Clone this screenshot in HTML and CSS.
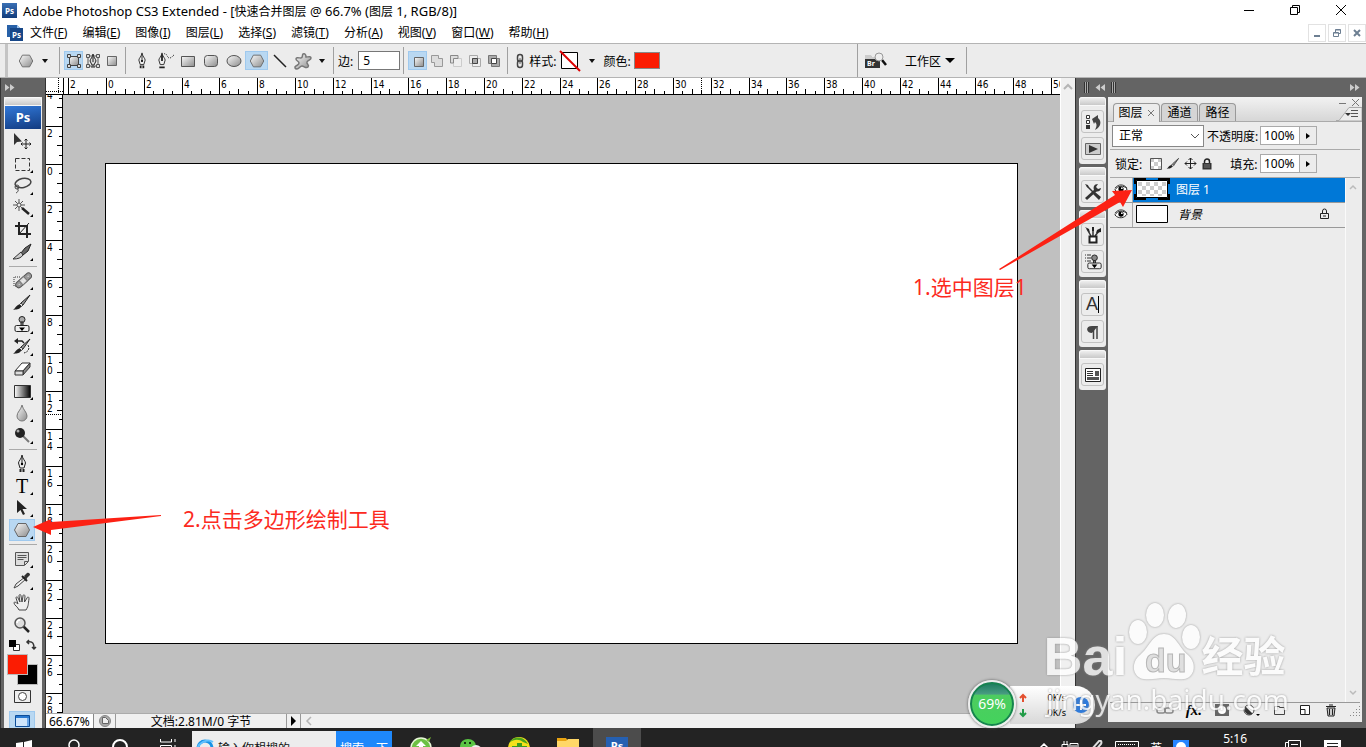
FILE: index.html
```html
<!DOCTYPE html>
<html lang="zh-CN">
<head>
    <meta charset="UTF-8">
    <meta name="viewport" content="width=device-width, initial-scale=1.0">
    <title>Adobe Photoshop CS3 Extended</title>
    <link rel="stylesheet" href="styles.css">
</head>
<body>
    <!-- shared icons -->
    <svg class="sprite" aria-hidden="true">
        <defs>
            <linearGradient id="gray" x1="0" y1="0" x2="1" y2="1">
                <stop offset="0" stop-color="#fafafa"/><stop offset="1" stop-color="#8c8c8c"/>
            </linearGradient>
            <linearGradient id="fade"><stop offset="0" stop-color="#fff"/><stop offset="1" stop-color="#000"/></linearGradient>
            <pattern id="checks" width="8" height="8" patternUnits="userSpaceOnUse">
                <path fill="#fff" d="M0 0h8v8H0z"/><path fill="#ccc" d="M0 0h4v4H0zM4 4h4v4H4z"/>
            </pattern>
        </defs>
        <symbol id="i-hexagon" viewBox="0 0 20 20"><path d="M6 3.500h8l3.500 6.500-3.500 6.500H6L2.500 10z" fill="url(#gray)" stroke="#666"/></symbol>
        <symbol id="i-pen" viewBox="0 0 20 20"><path d="M10 1c.5 4 3.500 6 3.500 8L12 14H8L6.500 9C6.500 7 9.500 5 10 1z" fill="#eee" stroke="#222"/><path d="M10 3v7" stroke="#222"/><circle cx="10" cy="10" r="1.200"/><path d="M7.500 15h5v3h-5z" fill="#222"/><path d="M10 15v3" stroke="#eee"/></symbol>
        <symbol id="i-eye" viewBox="0 0 16 12"><path d="M1 7c3-5 10-6 14-1-3 5-10 6-14 1z" fill="#fff" stroke="#111"/><path d="M1 5c4-5 10-5 14 0" fill="none" stroke="#333"/><circle cx="8" cy="6" r="3"/><circle cx="9" cy="5" r="1" fill="#fff"/></symbol>
        <symbol id="i-lock" viewBox="0 0 12 12"><path d="M3.500 5V3.500a2.500 2.500 0 0 1 5 0V5" fill="none" stroke="#222" stroke-width="1.500"/><path d="M1.500 5h9v6.500h-9z" fill="#333"/><path d="M3 7h6M3 9h6" stroke="#777"/></symbol>
        <symbol id="i-brush" viewBox="0 0 20 20"><path d="M18 2l-9 8 2 2z" fill="#999" stroke="#222"/><path d="M9 10l2 2-1.500 1.500-2-2z" fill="#ddd" stroke="#444"/><path d="M7.500 11.500l2 2C7 17 4 16 1 17c2-1 3-5 6.500-5.500z" fill="#222"/></symbol>
        <symbol id="i-stamp" viewBox="0 0 20 20"><circle cx="10" cy="4.500" r="3" fill="#aaa" stroke="#222"/><path d="M9 7h2v4H9z" fill="#888" stroke="#222"/><rect x="3" y="10.500" width="14" height="6" rx="1.500" fill="#eee" stroke="#222"/><path d="M7 12.500h6L10 16z"/></symbol>
        <symbol id="i-zoom" viewBox="0 0 20 20"><path d="M11 11l6 6" stroke="#222" stroke-width="2.500"/><circle cx="8" cy="8" r="5" fill="#ddd" stroke="#555" stroke-width="1.500"/><path d="M5 8a3 3 0 0 1 3-3" stroke="#fff" fill="none" stroke-width="1.500"/></symbol>
        <symbol id="i-ffwd" viewBox="0 0 10 7"><path d="M0 0l4.500 3.500L0 7zM5 0l4.500 3.500L5 7z" fill="#ccc"/></symbol>
        <symbol id="i-link" viewBox="0 0 12 16"><rect x="3.500" y="1.500" width="5" height="7" rx="2.500" fill="none" stroke="#444" stroke-width="1.500"/><rect x="3.500" y="7.500" width="5" height="7" rx="2.500" fill="none" stroke="#444" stroke-width="1.500"/><path d="M6 5v6" stroke="#666"/></symbol>
    </svg>

    <div class="window">
        <header class="titlebar">
            <span class="ps-icon">Ps</span>
            <h1>Adobe Photoshop CS3 Extended - [<span>快速合并图层</span> @ 66.7% (<span>图层</span> 1, RGB/8)]</h1>
            <div class="win-buttons">
                <button aria-label="最小化"><svg width="12" height="12"><path d="M1 6.500h10" stroke="#000"/></svg></button>
                <button aria-label="还原"><svg width="12" height="12" fill="none" stroke="#000"><path d="M1.500 3.500h7v7h-7zM3.500 3.500v-2h7v7h-2"/></svg></button>
                <button aria-label="关闭"><svg width="12" height="12"><path d="M1 1l10 10M11 1L1 11" stroke="#000"/></svg></button>
            </div>
        </header>

        <nav class="menubar">
            <svg class="doc-icon" width="16" height="16"><path d="M0 0h10l3 3v9H0z" fill="#2861a8"/><path d="M3 3h13v13H3z" fill="#174788"/><path d="M10 0v3h3z" fill="#9cc3ee"/><text x="5" y="13" font-size="8" font-weight="bold" fill="#fff">Ps</text></svg>
            <button>文件(<u>F</u>)</button>
            <button>编辑(<u>E</u>)</button>
            <button>图像(<u>I</u>)</button>
            <button>图层(<u>L</u>)</button>
            <button>选择(<u>S</u>)</button>
            <button>滤镜(<u>T</u>)</button>
            <button>分析(<u>A</u>)</button>
            <button>视图(<u>V</u>)</button>
            <button>窗口(<u>W</u>)</button>
            <button>帮助(<u>H</u>)</button>
            <div class="doc-buttons">
                <button aria-label="最小化文档"><svg width="10" height="10"><path d="M2 8h6" stroke="#6d7f92" stroke-width="2"/></svg></button>
                <button aria-label="还原文档"><svg width="10" height="10" fill="none" stroke="#6d7f92"><path d="M1.500 4.500h5v4h-5zM3.500 4V1.500h5v4H7M3.500 2h5M1.500 5h5"/></svg></button>
                <button aria-label="关闭文档"><svg width="10" height="10"><path d="M2 2l6 6M8 2L2 8" stroke="#6d7f92" stroke-width="2"/></svg></button>
            </div>
        </nav>

        <div class="options">
            <span class="options-grip"></span>
            <div class="opt-group preset">
                <button class="opt-btn" aria-label="多边形预设"><svg width="18" height="18"><use href="#i-hexagon"/></svg></button>
                <button class="caret" aria-label="预设列表"></button>
            </div>
            <div class="opt-group tight">
                <button class="opt-btn on" aria-label="形状图层"><svg width="16" height="16"><path d="M3.500 3.500h9v9h-9z" fill="url(#gray)" stroke="#444"/><path d="M1.500 1.500h3v3h-3zM11.500 1.500h3v3h-3zM1.500 11.500h3v3h-3zM11.500 11.500h3v3h-3z" fill="#ddd" stroke="#444"/></svg></button>
                <button class="opt-btn" aria-label="路径"><svg width="16" height="16"><path d="M3 3h10v10H3z" fill="none" stroke="#555"/><path d="M1.500 1.500h3v3h-3zM11.500 1.500h3v3h-3zM1.500 11.500h3v3h-3zM11.500 11.500h3v3h-3z" fill="#ddd" stroke="#555"/><path d="M8 1c0 3 3 5 3 7l-2 4H7L5 8c0-2 3-4 3-7zM6 14h4" fill="#ddd" stroke="#222"/><path d="M8 4v5" stroke="#222"/></svg></button>
                <button class="opt-btn" aria-label="填充像素"><svg width="16" height="16"><path d="M3.500 3.500h9v9h-9z" fill="url(#gray)" stroke="#666"/></svg></button>
            </div>
            <div class="opt-group shapes">
                <button class="opt-btn" aria-label="钢笔"><svg width="18" height="18"><use href="#i-pen"/></svg></button>
                <button class="opt-btn" aria-label="自由钢笔"><svg width="18" height="18"><g transform="translate(-3 0) scale(.9)"><path d="M10 1c.5 4 3.500 6 3.500 8L12 14H8L6.500 9C6.500 7 9.500 5 10 1z" fill="#eee" stroke="#222"/><path d="M10 3v7M7 17h6" stroke="#222" stroke-width="2"/></g><path d="M8 2c3-2 3 5 6 4s2-2 4-3" fill="none" stroke="#333" stroke-dasharray="1 1"/></svg></button>
                <button class="opt-btn" aria-label="矩形"><svg width="18" height="18"><path d="M2.500 4.500h13v10h-13z" fill="url(#gray)" stroke="#555"/></svg></button>
                <button class="opt-btn" aria-label="圆角矩形"><svg width="18" height="18"><rect x="2.500" y="3.500" width="13" height="11" rx="3" fill="url(#gray)" stroke="#555"/></svg></button>
                <button class="opt-btn" aria-label="椭圆"><svg width="18" height="18"><ellipse cx="9" cy="9" rx="7" ry="5.500" fill="url(#gray)" stroke="#555"/></svg></button>
                <button class="opt-btn on" aria-label="多边形"><svg width="18" height="18"><use href="#i-hexagon"/></svg></button>
                <button class="opt-btn" aria-label="直线"><svg width="18" height="18"><path d="M3 3l12 12" stroke="#222" stroke-width="1.500"/></svg></button>
                <button class="opt-btn" aria-label="自定形状"><svg width="20" height="18"><path d="M10 2c2-1 3 1 3 3 2 0 5-1 5 1s-3 2-4 4 3 3 1 5-4-1-6-1-3 3-5 3-3-2-1-3c1-1 3-1 3-3S3 9 3 7s3-1 5-1 1-3 2-4z" fill="url(#gray)" stroke="#777" stroke-width="1.500"/></svg></button>
                <button class="caret" aria-label="几何选项"></button>
            </div>
            <div class="opt-group">
                <label for="sides">边:</label>
                <input class="sides" id="sides" type="text" value="5">
            </div>
            <div class="opt-group tight">
                <button class="opt-btn on" aria-label="新建形状"><svg width="16" height="16"><path d="M4.500 4.500h9v9h-9z" fill="url(#gray)" stroke="#666"/></svg></button>
                <button class="opt-btn" aria-label="添加"><svg width="16" height="16" fill="#ddd" stroke="#999"><path d="M2.500 2.500h7v3h4v8h-8v-4h-3z"/></svg></button>
                <button class="opt-btn" aria-label="减去"><svg width="16" height="16" fill="#eee" stroke="#ccc"><path d="M5.500 5.500h8v8h-8z"/><path d="M2.500 10V2.500H10v3H5.500V10z" stroke="#888" fill="#ddd"/></svg></button>
                <button class="opt-btn" aria-label="交叉"><svg width="16" height="16" fill="#eee" stroke="#aaa"><path d="M2.500 2.500h8v8h-8zM5.500 5.500h8v8h-8z"/><path d="M5.500 5.500h5v5h-5z" stroke="#444" fill="#aaa"/></svg></button>
                <button class="opt-btn" aria-label="重叠除外"><svg width="16" height="16" fill="#aaa" stroke="#777"><path d="M2.500 2.500h8v8h-8zM5.500 5.500h8v8h-8z"/><path d="M5.500 5.500h5v5h-5z" stroke="#444" fill="#fff"/></svg></button>
            </div>
            <div class="opt-group style-group">
                <svg width="12" height="16"><use href="#i-link"/></svg>
                <span>样式:</span>
                <button class="style-box" aria-label="样式"><svg width="22" height="22"><path d="M2.500 2.500h16v16h-16z" fill="#fff" stroke="#000"/><path d="M1 1l20 20" stroke="#d00" stroke-width="2"/></svg></button>
                <button class="caret" aria-label="样式列表"></button>
                <span>颜色:</span>
                <button class="color-box" aria-label="颜色"></button>
            </div>
            <div class="workspace">
                <button aria-label="转到 Bridge"><svg width="24" height="18"><path d="M1 4h6l1 2h8v10H1z" fill="#333"/><path d="M1 3h6l1 2h6v2H1z" fill="#ccc"/><path d="M18 8l4 5" stroke="#111" stroke-width="2.500"/><circle cx="15" cy="5" r="4" fill="#eee" stroke="#999"/><text x="3" y="14" font-size="7" font-weight="bold" fill="#fff">Br</text></svg></button>
                <button class="workspace-menu">工作区<span class="triangle"></span></button>
            </div>
        </div>

        <main class="main">
            <aside class="toolbox">
                <div class="toolbox-head"><svg width="10" height="7"><use href="#i-ffwd"/></svg></div>
                <div class="tools">
                    <div class="grip"></div>
                    <div class="ps-logo">Ps</div>
                    <div class="tool-list">
                        <button class="tool plain" aria-label="移动"><svg width="20" height="20"><path d="M2 1v12l3-3 5-.5z" fill="#333"/><path d="M14 7v10M9 12h10M12.500 8.500L14 7l1.500 1.500M12.500 15.500L14 17l1.500-1.500M10.500 10.500L9 12l1.500 1.500M17.500 10.500L19 12l-1.500 1.500" fill="none" stroke="#222"/></svg></button>
                        <button class="tool" aria-label="矩形选框"><svg width="20" height="20"><path d="M3.500 4.500h14v12h-14z" fill="none" stroke="#333" stroke-dasharray="4 2"/></svg></button>
                        <button class="tool" aria-label="套索"><svg width="20" height="20" fill="none" stroke="#444"><ellipse cx="11" cy="7" rx="8" ry="4.500" transform="rotate(-12 11 7)" stroke-width="1.500"/><circle cx="5" cy="11" r="2"/><path d="M5 13c3 0 0 4-1 4"/></svg></button>
                        <button class="tool" aria-label="魔棒"><svg width="20" height="20" stroke="#555"><path d="M7 1v12M1 7h12M3 3l8 8M11 3l-8 8"/><circle cx="7" cy="7" r="2" fill="#eee"/><path d="M10 10l7 6" stroke="#222" stroke-width="2.500"/></svg></button>
                        <button class="tool plain" aria-label="裁剪"><svg width="20" height="20" fill="none" stroke="#222" stroke-width="2"><path d="M7 2v12h12M3 6h12v12"/><path d="M17 3L7 14" stroke-width="1"/></svg></button>
                        <button class="tool" aria-label="切片"><svg width="20" height="20"><path d="M19 2l-6 4-4 5 2 2 5-4z" fill="#666" stroke="#222"/><path d="M9 10L1 17c5 0 8-1 10-4z" fill="#ccc" stroke="#333"/></svg></button>
                        <hr>
                        <button class="tool" aria-label="修复画笔"><svg width="20" height="20"><path d="M8 6H2v9h6" fill="none" stroke="#333" stroke-dasharray="1 1"/><g transform="rotate(-42 12 9)"><rect x="2" y="6" width="19" height="6" rx="3" fill="#999" stroke="#555"/><path d="M8 6h6v6H8z" fill="#ddd" stroke="#777"/><path d="M10 8v2M12 8v2M5 9h1M17 9h1" stroke="#eee"/></g></svg></button>
                        <button class="tool" aria-label="画笔"><svg width="20" height="20"><use href="#i-brush"/></svg></button>
                        <button class="tool" aria-label="仿制图章"><svg width="20" height="20"><use href="#i-stamp"/></svg></button>
                        <button class="tool" aria-label="历史记录画笔"><svg width="20" height="20"><use href="#i-brush"/><path d="M5 4h5l2 2" fill="none" stroke="#222" stroke-width="1.500"/><path d="M2 4l4-3v6z" fill="#222"/><path d="M16 8c2 4 0 7-4 8" fill="none" stroke="#222" stroke-dasharray="2 1"/></svg></button>
                        <button class="tool" aria-label="橡皮擦"><svg width="20" height="20" stroke="#333"><path d="M10 4h8l-7 8H3z" fill="#fff"/><path d="M18 4v4l-7 8v-4z" fill="#888"/><path d="M3 12h8v4H3z" fill="#ddd"/></svg></button>
                        <button class="tool" aria-label="渐变"><svg width="20" height="20"><path d="M2.500 4.500h16v12h-16z" fill="url(#fade)" stroke="#333"/></svg></button>
                        <button class="tool" aria-label="模糊"><svg width="20" height="20"><path d="M10 2c1 5 5 7 5 11a5 5 0 0 1-10 0c0-4 4-6 5-11z" fill="url(#gray)" stroke="#777"/></svg></button>
                        <button class="tool" aria-label="减淡"><svg width="20" height="20"><path d="M10 10l7 7" stroke="#777" stroke-width="2"/><circle cx="8" cy="8" r="5" fill="#222"/><circle cx="6" cy="6" r="1.500" fill="#aaa"/></svg></button>
                        <hr>
                        <button class="tool" aria-label="钢笔工具"><svg width="20" height="20"><use href="#i-pen"/></svg></button>
                        <button class="tool type-tool" aria-label="文字">T</button>
                        <button class="tool" aria-label="路径选择"><svg width="20" height="20"><path d="M5 2v13l3.500-3 2.500 5 2-1-2.500-5H15z" fill="#222"/></svg></button>
                        <button class="tool on" aria-label="多边形工具"><svg width="20" height="20"><use href="#i-hexagon"/></svg></button>
                        <hr>
                        <button class="tool" aria-label="注释"><svg width="20" height="20"><path d="M3.500 3.500h13v9l-4 4h-9z" fill="#ddd" stroke="#555"/><path d="M12.500 16v-3.500H16M5.500 6.500h9M5.500 8.500h9M5.500 10.500h6" fill="none" stroke="#555"/></svg></button>
                        <button class="tool" aria-label="吸管"><svg width="20" height="20"><path d="M13 6l1.500 1.500L6 15l-4 2 2-4z" fill="#eee" stroke="#444"/><path d="M12 5l3-3c2-1 3 1 3 2l-4 4z" fill="#333"/><path d="M10 5l5 5" stroke="#222" stroke-width="2"/></svg></button>
                        <button class="tool plain" aria-label="抓手"><svg width="20" height="20"><path d="M7 17c-1-3-5-5-5-7s3 0 4 1L4 5c0-2 2-1 2 0l2 4-1-6c0-2 2-2 2 0l1 6 1-6c0-2 2-1 2 0l-.5 6L15 5c1-2 2-1 2 1-1 5 0 6-3 11z" fill="#eee" stroke="#444"/></svg></button>
                        <button class="tool plain" aria-label="缩放"><svg width="20" height="20"><use href="#i-zoom"/></svg></button>
                        <div class="color-reset">
                            <button aria-label="默认颜色"><svg width="11" height="11"><path d="M4.500 4.500h6v6h-6z" fill="#fff" stroke="#333"/><path d="M0 0h7v7H0z"/></svg></button>
                            <button aria-label="切换颜色"><svg width="12" height="12"><path d="M3 3c5-1 6 2 6 6M4 1L2 3l2 2M7 8l2 2 2-2" fill="none" stroke="#333" stroke-width="1.500"/></svg></button>
                        </div>
                        <div class="swatches">
                            <button class="background-color" aria-label="背景色"></button>
                            <button class="foreground-color" aria-label="前景色"></button>
                        </div>
                        <button class="tool plain" aria-label="快速蒙版"><svg width="20" height="20"><path d="M2.500 3.500h16v12h-16z" fill="#eee" stroke="#333"/><circle cx="10.500" cy="9.500" r="4" fill="#fff" stroke="#444"/></svg></button>
                        <button class="tool plain on screen-mode" aria-label="屏幕模式"><svg width="20" height="18"><path d="M3.500 2.500h14v11h-14z" fill="#cfe5fb" stroke="#0d4d99"/><path d="M4 3h13v2H4z" fill="#2878d0"/><path d="M15 5h2v8h-2z" fill="#6aa7e8"/></svg></button>
                    </div>
                </div>
            </aside>

            <section class="document">
                <div class="ruler-row">
                    <svg class="ruler-corner" width="17" height="17"><path d="M12.500 0v17M0 13.500h17" stroke="#000" stroke-dasharray="1 1"/></svg>
                    <svg class="ruler-top" id="rulerTop"></svg>
                </div>
                <div class="canvas-row">
                    <svg class="ruler-left" id="rulerLeft"></svg>
                    <div class="pasteboard"><div class="artboard"></div></div>
                </div>
                <div class="scroll-y"><svg width="10" height="8"><path d="M1 6l4-4 4 4" fill="none" stroke="#b5b5b5" stroke-width="2"/></svg></div>
                <footer class="status">
                    <input type="text" value="66.67%" aria-label="缩放比例">
                    <button class="status-icon" aria-label="版本"><svg width="14" height="14"><circle cx="7" cy="7" r="5.500" fill="#aaa" stroke="#888"/><path d="M4.500 3.500h3l3 3v3h-6z" fill="#eee" stroke="#666"/></svg></button>
                    <span class="doc-size">文档:2.81M/0 字节</span>
                    <button class="status-more" aria-label="状态菜单"></button>
                    <div class="scroll-x"><svg width="8" height="10"><path d="M6 1L2 5l4 4" fill="none" stroke="#b5b5b5" stroke-width="1.500"/></svg></div>
                </footer>
            </section>

            <aside class="dock">
                <div class="dock-head">
                    <span class="bars"></span>
                    <svg class="rewind" width="10" height="7"><use href="#i-ffwd"/></svg>
                    <span class="bars"></span>
                    <svg class="collapse" width="10" height="7"><use href="#i-ffwd"/></svg>
                </div>
                <div class="dock-body">
                    <div class="strip">
                        <div class="strip-group">
                            <div class="grip"></div>
                            <button aria-label="历史记录"><svg width="18" height="18"><path d="M2.500 2.500h3v3h-3zM2.500 7.500h3v3h-3z" fill="#fff" stroke="#333"/><path d="M2 12h4v4H2z" fill="#333"/><path d="M8 6l6-4v3c4 3 3 9-3 12 2-4 2-6 0-8l-1 2z" fill="#444"/></svg></button>
                            <button aria-label="动作"><svg width="18" height="18"><path d="M1.500 3.500h15v11h-15z" fill="#ccc" stroke="#666"/><path d="M5 5l9 4-9 4z" fill="#333"/></svg></button>
                        </div>
                        <div class="strip-group">
                            <div class="grip"></div>
                            <button aria-label="工具预设"><svg width="18" height="18"><path d="M3 3l7 7" stroke="#333" stroke-width="1.500"/><path d="M1 1l3 1 1 3-2-1zM9 11l2-2 6 5-2 3z" fill="#333"/><path d="M2 16L12 7" stroke="#333" stroke-width="3"/><path d="M17 5l-3 1-2-2 2-3c-4 0-5 3-4 6 3 3 7 1 7-2z" fill="#333"/></svg></button>
                        </div>
                        <div class="strip-group">
                            <div class="grip"></div>
                            <button aria-label="画笔面板"><svg width="18" height="18"><path d="M9 10V3M7 10L3 3M11 10l4-5" stroke="#333" stroke-width="1.500"/><path d="M1 1l4 2 1 4zM8 1h2v4H8zM17 2l-4 2-1 3 5-1z" fill="#222"/><path d="M5.500 10.500h7v6h-7z" fill="#fff" stroke="#222" stroke-width="2"/></svg></button>
                            <button aria-label="仿制源"><svg width="18" height="18"><g transform="translate(1 1) scale(.95)"><circle cx="10" cy="4" r="3" fill="#888" stroke="#222"/><path d="M9 7h2v3H9z" fill="#888" stroke="#222"/><rect x="3" y="9.500" width="14" height="6" rx="1.500" fill="#eee" stroke="#222"/><path d="M7 11h6l-3 4z"/></g><path d="M1 2h6M1 5h6M1 8h6" stroke="#333" stroke-dasharray="1 1 4"/></svg></button>
                        </div>
                        <div class="strip-group">
                            <div class="grip"></div>
                            <button class="char-panel" aria-label="字符">A</button>
                            <button aria-label="段落"><svg width="18" height="18"><path d="M14 3H8c-7 0-6 7 0 7" fill="#444"/><path d="M9.500 3v13M13 3v13" stroke="#444" stroke-width="1.500"/></svg></button>
                        </div>
                        <div class="strip-group">
                            <div class="grip"></div>
                            <button aria-label="图层复合"><svg width="18" height="18"><path d="M1.500 2.500h15v13h-15z" fill="#fff" stroke="#222"/><path d="M3 5.500h6M3 7.500h6M3 9.500h6" stroke="#333"/><path d="M11 5h4v5h-4zM3 11h12v3H3z" fill="#555"/></svg></button>
                        </div>
                    </div>

                    <section class="panel">
                        <div class="panel-tabs">
                            <button class="tab active">图层 <svg width="8" height="8"><path d="M1 1l6 6M7 1L1 7" stroke="#777"/></svg></button>
                            <button class="tab">通道</button>
                            <button class="tab">路径</button>
                            <div class="panel-controls">
                                <svg width="24" height="10"><path d="M1 6.500h7M14 2l7 7M21 2l-7 7" stroke="#777"/></svg>
                                <svg class="panel-menu" width="26" height="14"><path d="M0 13.500h3L13 .5h13V14H0z" fill="#ececec" stroke="#aaa"/><path d="M9 6h6l-3 3z" fill="#333"/><path d="M15 3.500h7M15 6.500h7M15 9.500h7" stroke="#555"/></svg>
                            </div>
                        </div>
                        <div class="panel-row">
                            <select class="blend" aria-label="混合模式"><option>正常</option></select>
                            <label for="opacity">不透明度:</label>
                            <input class="percent" id="opacity" type="text" value="100%">
                            <button class="spin" aria-label="不透明度滑块"></button>
                        </div>
                        <div class="panel-row">
                            <span class="lock-label">锁定:</span>
                            <div class="locks">
                                <button aria-label="锁定透明像素"><svg width="12" height="12"><path d="M.5.5h11v11H.5z" fill="url(#checks)" stroke="#555"/></svg></button>
                                <button aria-label="锁定图像像素"><svg width="14" height="14"><use href="#i-brush"/></svg></button>
                                <button aria-label="锁定位置"><svg width="13" height="13" fill="none" stroke="#222"><path d="M6.500 1v11M1 6.500h11M4.500 3l2-2 2 2M4.500 10l2 2 2-2M3 4.500l-2 2 2 2M10 4.500l2 2-2 2"/></svg></button>
                                <button aria-label="锁定全部"><svg width="12" height="12"><use href="#i-lock"/></svg></button>
                            </div>
                            <label for="fill">填充:</label>
                            <input class="percent" id="fill" type="text" value="100%">
                            <button class="spin" aria-label="填充滑块"></button>
                        </div>
                        <div class="layers">
                            <ul>
                                <li class="layer selected">
                                    <button class="eye" aria-label="显示图层 1"><svg width="14" height="12"><use href="#i-eye"/></svg></button>
                                    <div class="layer-main"><svg class="thumb" width="36" height="22"><path d="M1 6V1h11M24 1h11v5M35 16v5H24M12 21H1v-5" fill="none" stroke="#000" stroke-width="2"/><path d="M2.500 2.500h31v17h-31z" fill="#fff" stroke="#000"/><path d="M4 4h28v14H4z" fill="url(#checks)"/></svg><span>图层 1</span></div>
                                </li>
                                <li class="layer">
                                    <button class="eye" aria-label="显示背景"><svg width="14" height="12"><use href="#i-eye"/></svg></button>
                                    <div class="layer-main"><svg class="thumb" width="36" height="22"><path d="M2.500 2.500h31v17h-31z" fill="#fff" stroke="#000"/></svg><span class="italic">背景</span><svg class="layer-lock" width="11" height="12" fill="none" stroke="#222"><path d="M1.500 5.500h8v5h-8zM3.500 5V3a2 2 0 0 1 4 0v2M4 8h3"/></svg></div>
                                </li>
                            </ul>
                            <div class="layers-scroll">
                                <svg width="8" height="6"><path d="M1 5l3-3 3 3" fill="none" stroke="#bbb" stroke-width="1.500"/></svg>
                                <svg width="8" height="6"><path d="M1 1l3 3 3-3" fill="none" stroke="#bbb" stroke-width="1.500"/></svg>
                            </div>
                        </div>
                        <div class="panel-foot">
                            <button aria-label="链接图层"><svg width="18" height="14" fill="none" stroke="#888" stroke-width="1.500"><rect x="1" y="5" width="8" height="5" rx="2"/><rect x="9" y="5" width="8" height="5" rx="2"/></svg></button>
                            <button class="fx" aria-label="图层样式">fx.</button>
                            <button aria-label="图层蒙版"><svg width="16" height="14"><path d="M1 1h14v12H1z" fill="#666"/><circle cx="8" cy="7" r="4" fill="#fff"/></svg></button>
                            <button aria-label="调整图层"><svg width="18" height="14"><circle cx="7" cy="7" r="5" fill="#fff" stroke="#444"/><path d="M3.500 3.500A5 5 0 0 0 10.500 10.500z" fill="#333"/><path d="M14 11h4l-2 2z"/></svg></button>
                            <button aria-label="新建组"><svg width="14" height="14"><path d="M2.500 3.500h5v1h5v7h-10z" fill="#eee" stroke="#444"/></svg></button>
                            <button aria-label="新建图层"><svg width="14" height="14"><path d="M2.500 2.500h9v9h-9z" fill="#fff" stroke="#222"/><path d="M3 6.500h4V11" fill="none" stroke="#222"/></svg></button>
                            <button aria-label="删除图层"><svg width="14" height="14"><path d="M3 5h8l-1 8H4z" fill="#ccc" stroke="#222"/><path d="M2 3.500h10M5 2h4M5.500 6v6M8.500 6v6" stroke="#222"/></svg></button>
                            <svg width="10" height="14"><path d="M9.500 3v10M6.500 6v7M3.500 9v4M.5 12v1" stroke="#888" stroke-dasharray="1 2"/></svg>
                        </div>
                    </section>
                </div>
            </aside>
        </main>

        <footer class="taskbar">
            <button class="task" aria-label="开始"><svg width="18" height="16"><path d="M1 3l7-1v6H1zM9 2l8-2v8H9zM1 9h7v6l-7-1zM9 9h8v7l-8-1z" fill="#fff"/></svg></button>
            <button class="task" aria-label="搜索"><svg width="18" height="18"><circle cx="11" cy="6" r="5" fill="none" stroke="#fff" stroke-width="1.500"/><path d="M7 10l-6 7" stroke="#fff" stroke-width="1.500"/></svg></button>
            <button class="task" aria-label="Cortana"><svg width="18" height="18"><circle cx="9" cy="8" r="7" fill="none" stroke="#fff" stroke-width="2"/></svg></button>
            <button class="task" aria-label="任务视图"><svg width="18" height="18" fill="none" stroke="#fff"><path d="M1.500 0v3h11V0M1.500 6.500h11v7h-11zM16 0v3M16 6v3"/></svg></button>
            <form class="task-search">
                <svg width="18" height="18"><circle cx="9" cy="9" r="7" fill="none" stroke="#1793e6" stroke-width="3"/><path d="M1 11C2 4 11-1 17 3" fill="none" stroke="#60c1ff" stroke-width="2"/></svg>
                <input type="text" value="输入你想搜的" aria-label="搜索内容">
                <button type="button">搜索一下</button>
            </form>
            <div class="apps">
                <button class="task" aria-label="360 安全浏览器"><svg width="22" height="22"><circle cx="11" cy="11" r="10" fill="#6dc143" stroke="#e8f7d8" stroke-width="1.500"/><path d="M11 4l5 5h-3v5H9V9H6z" fill="#fff"/><path d="M16 3l5-3-2 5z" fill="#78bd36"/></svg></button>
                <button class="task" aria-label="微信"><svg width="22" height="22"><ellipse cx="9" cy="9" rx="8" ry="7" fill="#59c443"/><ellipse cx="17" cy="14" rx="6" ry="6" fill="#eee"/><circle cx="6" cy="6" r="1"/><circle cx="11" cy="6" r="1"/></svg></button>
                <button class="task" aria-label="360 安全卫士"><svg width="24" height="24"><circle cx="12" cy="12" r="11" fill="#f5e11c"/><path d="M2 7c4-7 14-8 19 1l-5-2C12 3 7 3 2 7z" fill="#4aa51c"/><path d="M10 7h5v3h5v4h-5v5h-5v-5H5v-4h5z" fill="#3a9b20"/></svg></button>
                <button class="task" aria-label="文件资源管理器"><svg width="22" height="20"><path d="M0 0h9l2 3H0z" fill="#e8a311"/><path d="M0 3h9l2-2h11v18H0z" fill="#ffd767"/></svg></button>
                <button class="task running" aria-label="Photoshop"><span class="task-ps">Ps</span></button>
            </div>
            <div class="tray">
                <svg width="12" height="10"><path d="M1 6l5-5 5 5" fill="none" stroke="#fff" stroke-width="1.500"/></svg>
                <svg width="18" height="14" fill="none" stroke="#fff"><path d="M3 0v3M6 0v3M1 3.500h6v5H1zM9 2.500h8v9H9zM10 5h6"/></svg>
                <svg width="14" height="16" fill="none" stroke="#ddd" stroke-width="2"><path d="M2 9L9 1c2-1 3 1 2 3L4 12M4 14l4-4"/></svg>
                <svg width="24" height="16" fill="none" stroke="#fff"><path d="M.5 1.500h23v12H.5z"/><path d="M3 4.500h18M3 7.500h18" stroke-dasharray="1 1"/></svg>
                <span class="ime">英</span>
                <svg width="16" height="16"><path d="M0 0h16v16H0z" fill="#2684ff"/><circle cx="8" cy="7" r="5" fill="#fff"/></svg>
                <time>5:16</time>
                <svg class="news" width="18" height="16" fill="none" stroke="#fff"><path d="M4.500.5h12v14h-12zM4 2.500H1.500V15M7 4.500h7M7 7.500h7"/></svg>
                <svg width="17" height="16"><path d="M0 0h17v14H0z" fill="#fff"/><path d="M3 3.500h11M3 6.500h11" stroke="#222"/></svg>
            </div>
        </footer>

        <!-- tutorial annotations over the editor -->
        <svg class="arrows" aria-hidden="true">
            <path d="M1132 190l-9 17-3-5-120 68-1-1 116-74-3-4z" fill="#fc2114"/>
            <path d="M33 527l18-8v3l110-7v1L51 530v5z" fill="#fc2114"/>
        </svg>
        <p class="note note-layer">1.选中图层1</p>
        <p class="note note-tool">2.点击多边形绘制工具</p>

        <div class="speed">
            <div class="ball">69%</div>
            <div class="rates">
                <div><svg width="8" height="10"><path d="M4 9V2M1 5l3-3 3 3" fill="none" stroke="#e3502f" stroke-width="2"/></svg><span>0K/s</span></div>
                <div><svg width="8" height="10"><path d="M4 1v7M1 5l3 3 3-3" fill="none" stroke="#219b47" stroke-width="2"/></svg><span>0K/s</span></div>
            </div>
            <svg class="speed-plus" width="16" height="16"><circle cx="8" cy="8" r="8" fill="#2f7bdb"/><path d="M8 3v10M3 8h10" stroke="#fff" stroke-width="2"/></svg>
        </div>

        <div class="watermark" aria-hidden="true">
            <div class="brand">
                <span class="bai">Bai</span>
                <svg width="74" height="80">
                    <g fill="#fff"><ellipse cx="10" cy="31" rx="9" ry="12"/><ellipse cx="27" cy="14" rx="9" ry="12"/><ellipse cx="49" cy="15" rx="9" ry="12" transform="rotate(8 49 15)"/><ellipse cx="63" cy="36" rx="9" ry="12"/><path d="M36 33c12 0 15 14 24 21 10 9 6 23-4 24-8 1-13-1-20-1s-12 2-20 1C5 77 2 62 12 54c9-7 12-21 24-21z"/></g>
                    <text x="17" y="71" font-size="34">du</text>
                </svg>
                <span class="jingyan">经验</span>
            </div>
            <div class="site">jingyan.baidu.com</div>
        </div>
    </div>
    <script src="script.js"></script>
</body>
</html>
```

FILE: styles.css
```css
* {
    box-sizing: border-box;
}
body {
    margin: 0;
    font-family: "Noto Sans", "Noto Sans CJK SC", sans-serif;
    font-size: 12px;
    color: #000;
}
button, input, select {
    font: inherit;
    color: inherit;
}
button {
    display: flex;
    align-items: center;
    justify-content: center;
    padding: 0;
    border: 0;
    background: none;
    white-space: nowrap;
}
h1, p, ul {
    margin: 0;
    padding: 0;
    list-style: none;
}
svg {
    display: block;
    flex: none;
}
.sprite {
    position: absolute;
    width: 0;
    height: 0;
}
.window {
    position: relative;
    display: flex;
    flex-direction: column;
    height: 100vh;
    overflow: hidden;
}

/* title and menus */
.titlebar {
    display: flex;
    align-items: center;
    height: 23px;
    padding: 0 19px 0 2px;
    background: #fff;
}
.titlebar h1 {
    margin-left: 6px;
    font-size: 13px;
    font-weight: normal;
    line-height: 20px;
    white-space: nowrap;
}
.titlebar h1 span {
    font-size: 12px;
}
.ps-icon {
    width: 15px;
    height: 15px;
    margin-bottom: 3px;
    background: linear-gradient(#3a70b4, #123c7c);
    color: #fff;
    font-size: 8px;
    font-weight: bold;
    line-height: 15px;
    text-align: center;
}
.win-buttons {
    display: flex;
    gap: 34px;
    margin-left: auto;
    margin-bottom: 3px;
}
.menubar {
    display: flex;
    align-items: center;
    gap: 15px;
    height: 20px;
    padding-left: 7px;
    background: #fff;
}
.menubar button {
    line-height: 18px;
}
.doc-icon {
    margin-right: -8px;
}
.doc-buttons {
    display: flex;
    gap: 2px;
    margin-left: auto;
}
.doc-buttons button {
    width: 18px;
    height: 18px;
    border: 1px solid #e2e2e2;
}

/* options bar */
.options {
    display: flex;
    align-items: center;
    height: 35px;
    padding-left: 5px;
    border-top: 1px solid #b4b4b4;
    border-bottom: 1px solid #b4b4b4;
    background: #ececec;
}
.options-grip {
    width: 3px;
    height: 33px;
    background: #c4c4c4;
}
.opt-group {
    display: flex;
    align-items: center;
    gap: 5px;
    height: 27px;
    padding: 0 3px 0 4px;
    border-right: 1px solid #a0a0a0;
    white-space: nowrap;
}
.opt-group.preset {
    gap: 0;
    padding: 0 6px;
}
.opt-group.tight, .opt-group.shapes {
    gap: 0;
}
.opt-group.tight {
    padding-right: 4px;
}
.opt-group.style-group {
    border-right: 0;
    gap: 3px;
    padding-left: 6px;
}
.opt-btn {
    width: 23px;
    height: 19px;
}
.tight .opt-btn {
    width: 19px;
}
.on {
    background: #b9d8f2;
    box-shadow: inset 0 0 0 1px #9fc9ee;
}
.caret {
    width: 16px;
    height: 20px;
}
.caret::before {
    content: "";
    border: 3px solid transparent;
    border-top: 4px solid #111;
    border-bottom: 0;
}
.sides {
    width: 42px;
    height: 19px;
    padding: 0 4px;
    border: 1px solid #777;
    background: #fff;
}
.color-box {
    width: 26px;
    height: 17px;
    border: 1px solid #888;
    background: #fb1c02;
}
.workspace {
    display: flex;
    align-items: center;
    gap: 17px;
    flex: 0 0 509px;
    height: 33px;
    margin-left: auto;
    padding-left: 6px;
    border-left: 1px solid #a0a0a0;
}
.workspace-menu {
    height: 27px;
    padding-right: 11px;
    border-right: 1px solid #a0a0a0;
}
.triangle {
    margin-left: 4px;
    border: 5px solid transparent;
    border-top-color: #000;
    border-bottom: 0;
}

.main {
    display: flex;
    flex: 1;
    min-height: 0;
}

/* toolbox */
.toolbox {
    flex: 0 0 46px;
    padding: 0 4px;
    overflow: hidden;
    background: #646464;
    border-left: 1px solid #333;
    border-right: 1px solid #333;
}
.toolbox-head {
    height: 19px;
    padding-top: 6px;
}
.tools {
    margin: 0 -1px;
    background: #ececec;
}
.grip {
    height: 9px;
    border: 1px solid #f8f8f8;
    border-radius: 3px 3px 0 0;
    background: linear-gradient(#eee, #c9c9c9);
}
.ps-logo {
    height: 23px;
    margin: 0 1px;
    background: linear-gradient(170deg, #3178d8, #123b80);
    color: #fff;
    font-size: 13px;
    font-weight: bold;
    line-height: 23px;
    text-align: center;
}
.tool-list {
    padding: 2px 5px 0;
}
.tool-list hr {
    height: 1px;
    margin: 3px 0;
    border: 0;
    background: #aaa;
}
.tool {
    position: relative;
    width: 26px;
    height: 22px;
}
.tool::after {
    content: "";
    position: absolute;
    right: 2px;
    bottom: 2px;
    border-left: 3px solid transparent;
    border-bottom: 3px solid #000;
}
.tool.plain::after {
    content: none;
}
.type-tool {
    font-family: "Liberation Serif", serif;
    font-size: 20px;
    line-height: 22px;
}
.color-reset {
    display: flex;
    justify-content: space-between;
    align-items: center;
    height: 18px;
}
.swatches {
    position: relative;
    height: 32px;
    margin: 0 -3px;
}
.foreground-color, .background-color {
    position: absolute;
    width: 21px;
    height: 21px;
    border: 1px solid #bbb;
}
.foreground-color {
    left: 1px;
    top: 0;
    background: #fb1c02;
}
.background-color {
    left: 11px;
    top: 10px;
    background: #000;
}
.screen-mode {
    margin-top: 3px;
}

/* document window */
.document {
    display: grid;
    grid-template: 17px 1fr 15px / 1fr 15px;
    flex: 1;
    min-width: 0;
    background: #f0f0f0;
}
.ruler-row, .canvas-row {
    display: flex;
    min-width: 0;
    min-height: 0;
}
.ruler-corner, .ruler-top {
    height: 17px;
    border-bottom: 1px solid #000;
    background: #fff;
}
.ruler-top {
    flex: 1;
    min-width: 0;
    border-left: 1px solid #000;
}
.ruler-left {
    width: 17px;
    height: 100%;
    border-right: 1px solid #000;
    background: #fff;
}
.ruler-top text, .ruler-left text {
    font-family: "DejaVu Sans Condensed", "DejaVu Sans", sans-serif;
    font-size: 10px;
}
.pasteboard {
    display: flex;
    flex: 1;
    padding: 68px 42px 69px;
    background: #c0c0c0;
}
.artboard {
    flex: 1;
    border: 1px solid #000;
    background: #fff;
}
.scroll-y {
    grid-column: 2;
    grid-row: 1 / 3;
    padding: 5px 0 0 2px;
    border-left: 1px solid #fff;
}
.status {
    grid-column: 1 / 3;
    display: flex;
    line-height: 15px;
    border-top: 1px solid #ababab;
}
.status input {
    width: 48px;
    padding: 1px 2px 0 3px;
    border: 0;
    border-right: 1px solid #888;
    background: #fff;
}
.status-icon {
    width: 22px;
    border-right: 1px solid #999;
}
.doc-size {
    width: 170px;
    text-align: center;
}
.status-more {
    width: 15px;
    border: solid #999;
    border-width: 0 1px;
}
.status-more::before {
    content: "";
    border: 5px solid transparent;
    border-left-color: #000;
    border-right: 0;
}
.scroll-x {
    flex: 1;
    padding: 2px 4px;
    background: #f0f0f0;
}

/* right dock */
.dock {
    display: flex;
    flex-direction: column;
    flex: 0 0 291px;
    padding: 0 4px 6px 3px;
    border-left: 1px solid #333;
    background: #646464;
}
.dock-head {
    display: flex;
    align-items: center;
    gap: 6px;
    height: 19px;
    padding: 0 2px 0 5px;
}
.bars {
    width: 5px;
    height: 11px;
    border: solid #333;
    border-width: 0 1px;
    background: linear-gradient(90deg, #aaa 1px, #333 1px, #333 2px, #aaa 2px);
}
.rewind {
    transform: rotate(180deg);
}
.collapse {
    margin-left: auto;
}
.dock-body {
    display: flex;
    flex: 1;
    gap: 2px;
    min-height: 0;
}
.strip {
    display: flex;
    flex-direction: column;
    gap: 3px;
    width: 27px;
}
.strip-group {
    display: flex;
    flex-direction: column;
    align-items: center;
    gap: 4px;
    padding-bottom: 4px;
    border-radius: 3px;
    background: #ececec;
}
.strip-group .grip {
    width: 100%;
}
.strip-group button {
    width: 23px;
    height: 23px;
    border: 1px solid #c2c2c2;
    border-radius: 3px;
}
.char-panel {
    font-family: "Liberation Sans", sans-serif;
    font-size: 18px;
    color: #333;
}
.char-panel::after {
    content: "";
    width: 1px;
    height: 17px;
    background: #000;
}
.panel {
    display: flex;
    flex: 1;
    flex-direction: column;
    min-width: 0;
    padding: 0 2px;
    background: #ececec;
}
.panel-tabs {
    display: flex;
    align-items: flex-end;
    gap: 1px;
    height: 25px;
    margin: 0 -2px;
    padding-left: 5px;
    border-bottom: 1px solid #aaa;
    background: linear-gradient(#f2f2f2, #d6d6d6);
}
.tab {
    width: 37px;
    height: 18px;
    border: 1px solid #999;
    border-bottom: 0;
    border-radius: 4px 4px 0 0;
    background: #d5d5d5;
    line-height: 18px;
}
.tab.active {
    gap: 4px;
    width: 47px;
    height: 19px;
    margin-bottom: -1px;
    background: #ececec;
}
.panel-controls {
    display: flex;
    flex-direction: column;
    align-items: flex-end;
    margin-left: auto;
}
.panel-row {
    display: flex;
    align-items: center;
    height: 28px;
    padding-left: 2px;
    border-bottom: 1px solid #aaa;
    white-space: nowrap;
}
.blend {
    appearance: none;
    width: 92px;
    height: 22px;
    margin-right: 3px;
    padding: 0 6px;
    border: 1px solid #888;
    border-radius: 0;
    background: #fff url("data:image/svg+xml,%3Csvg xmlns='http://www.w3.org/2000/svg' width='10' height='6'%3E%3Cpath d='M1 1l4 4 4-4' fill='none' stroke='%23555'/%3E%3C/svg%3E") no-repeat right 3px center;
}
.percent {
    width: 40px;
    height: 19px;
    margin-left: auto;
    padding: 0 3px;
    border: 1px solid #aaa;
    background: #fff;
}
.spin {
    width: 17px;
    height: 19px;
    margin-right: 43px;
    border: 1px solid #aaa;
    border-left: 0;
}
.spin::before {
    content: "";
    border: 3px solid transparent;
    border-left: 4px solid #000;
    border-right: 0;
}
.lock-label {
    margin-left: 3px;
}
.locks {
    display: flex;
    align-items: center;
    gap: 4px;
    margin: 0 17px 0 8px;
}
.layers {
    display: flex;
    flex: 1;
    border-bottom: 1px solid #999;
}
.layers ul {
    flex: 1;
}
.layer {
    display: flex;
    height: 25px;
    border-bottom: 1px solid #999;
}
.eye {
    width: 23px;
    padding-bottom: 2px;
    border-right: 1px solid #aaa;
}
.layer-main {
    display: flex;
    flex: 1;
    align-items: center;
    padding: 0 0 2px 1px;
}
.layer-main span {
    margin-left: 6px;
}
.layer-main .italic {
    margin-left: 8px;
    font-style: italic;
}
.selected .layer-main {
    background: #0078d7;
    color: #fff;
}
.layer-lock {
    margin-left: auto;
    margin-right: 15px;
}
.layers-scroll {
    display: flex;
    flex-direction: column;
    align-items: center;
    justify-content: space-between;
    width: 15px;
    padding: 6px 0;
    border-left: 1px solid #fafafa;
}
.panel-foot {
    display: flex;
    align-items: center;
    justify-content: flex-end;
    gap: 12px;
    height: 19px;
    padding-bottom: 5px;
}
.fx {
    font-family: "Liberation Serif", serif;
    font-size: 15px;
    font-style: italic;
    font-weight: bold;
}

/* taskbar, its lower half runs off the screen */
.taskbar {
    display: flex;
    align-items: flex-start;
    flex: 0 0 19px;
    overflow: hidden;
    background: #232323;
    color: #fff;
}
.task {
    width: 48px;
    height: 40px;
}
.task-search {
    display: flex;
    align-items: center;
    height: 34px;
    margin-top: 3px;
    background: #ededed;
}
.task-search svg {
    margin-left: 4px;
}
.task-search input {
    width: 122px;
    padding: 0 4px;
    border: 0;
    background: none;
    color: #111;
}
.task-search button {
    width: 56px;
    height: 34px;
    background: #1e88fb;
}
.apps {
    display: flex;
    gap: 1px;
    margin-left: 5px;
}
.running {
    background: #4c4c4c;
}
.task-ps {
    width: 22px;
    height: 22px;
    background: #2560b2;
    font-size: 11px;
    font-weight: bold;
    line-height: 18px;
}
.tray {
    display: flex;
    align-items: center;
    gap: 11px;
    height: 40px;
    margin-left: auto;
    padding-right: 25px;
}
.tray time {
    align-self: flex-start;
    margin: 2px 26px 0 23px;
}
.news {
    margin-right: 11px;
}

/* things that float over the editor */
.arrows {
    position: absolute;
    left: 0;
    top: 0;
    width: 100%;
    height: 100%;
    pointer-events: none;
}
.note {
    position: absolute;
    color: #fc2a1e;
    font-size: 21px;
    line-height: 30px;
    white-space: nowrap;
}
.note-layer {
    left: 913px;
    top: 272px;
}
.note-tool {
    left: 183px;
    top: 504px;
}
.speed {
    position: absolute;
    right: 271px;
    bottom: 23px;
    display: flex;
    align-items: center;
    width: 85px;
    height: 38px;
    padding: 0 6px 0 9px;
    border-radius: 0 19px 19px 0;
    background: linear-gradient(#fff, #d8d8d8);
    font-size: 9px;
}
.ball {
    position: absolute;
    left: -42px;
    top: -6px;
    width: 48px;
    height: 48px;
    border: 2px solid #eee;
    border-radius: 50%;
    background: linear-gradient(#17785a, #4a9c83 28%, #4dcc60 29%, #43d35c);
    box-shadow: inset 0 0 0 2px #178350, 0 0 3px #555;
    color: #fff;
    font-size: 14px;
    line-height: 43px;
    text-align: center;
}
.rates {
    flex: 1;
}
.rates div {
    display: flex;
    align-items: center;
    justify-content: space-between;
    height: 15px;
    margin-right: 7px;
}
.watermark {
    position: absolute;
    right: 77px;
    bottom: 30px;
    color: #fff;
    opacity: .8;
    filter: drop-shadow(0 0 1px #888);
    pointer-events: none;
}
.brand {
    display: flex;
    align-items: flex-end;
    font-weight: bold;
    height: 80px;
    line-height: 50px;
}
.bai {
    font-family: "Liberation Sans", sans-serif;
    font-size: 54px;
}
.brand text {
    font-family: "Liberation Sans", sans-serif;
    fill: #ddd;
    stroke: #aaa;
}
.jingyan {
    font-size: 42px;
}
.site {
    padding-left: 3px;
    font-size: 28px;
    line-height: 36px;
}
```

FILE: script.js
```js
// rulers: one labelled mark every 2cm, at 66.7% zoom
const STEP = 37.8;

function line(x1, y1, x2, y2, dotted) {
    return `<path d="M${x1} ${y1}L${x2} ${y2}" stroke="#000"${dotted ? ' stroke-dasharray="1 1"' : ''}/>`;
}

function drawTop() {
    const ruler = document.getElementById("rulerTop");
    const width = ruler.getBoundingClientRect().width;
    let out = "";
    for (let i = -1; 42 + i * STEP < width; i++) {
        const start = 42 + i * STEP;
        for (let q = 0; q < 4; q++) {
            const x = Math.round(start + q * STEP / 4) + 0.5;
            out += line(x, q === 0 ? 0 : q === 2 ? 11 : 13, x, 16);
        }
        out += `<text x="${Math.round(start) + 2}" y="10">${Math.abs(i * 2)}</text>`;
    }
    out += line(637.5, 0, 637.5, 16, true);
    ruler.innerHTML = out;
}

function drawLeft() {
    const ruler = document.getElementById("rulerLeft");
    const height = ruler.getBoundingClientRect().height;
    let out = "";
    for (let i = -2; 69 + i * STEP < height; i++) {
        const start = 69 + i * STEP;
        for (let q = 0; q < 4; q++) {
            const y = Math.round(start + q * STEP / 4) + 0.5;
            out += line(q === 0 ? 0 : q === 2 ? 11 : 13, y, 16, y);
        }
        String(Math.abs(i * 2)).split("").forEach((digit, n) => {
            out += `<text x="1" y="${Math.round(start) + 11 + n * 10}">${digit}</text>`;
        });
    }
    out += line(0, 319.5, 16, 319.5, true);
    ruler.innerHTML = out;
}

drawTop();
drawLeft();
```
